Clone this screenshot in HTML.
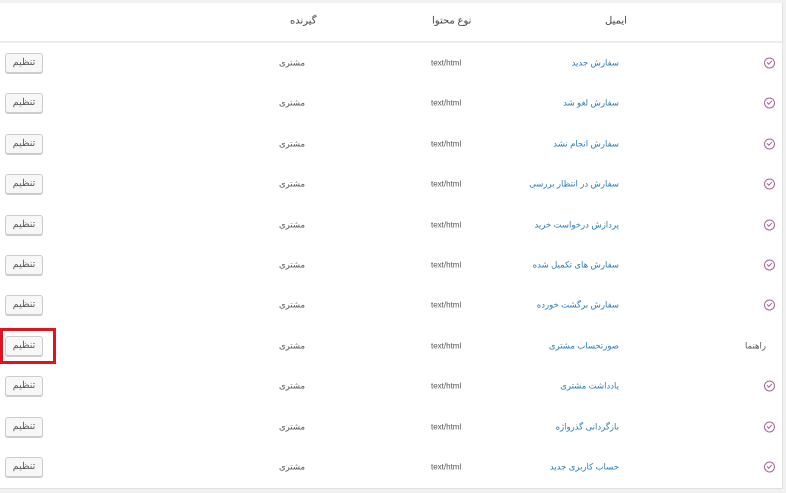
<!DOCTYPE html>
<html><head><meta charset="utf-8"><style>
body{margin:0;width:786px;height:493px;background:#f1f1f1;font-family:"Liberation Sans","Noto Sans CJK SC",sans-serif;font-size:8.5px;color:#555;position:relative;overflow:hidden}
.card{position:absolute;left:0;top:3px;width:782px;height:485px;background:#fff;border-right:1px solid #e2e2e2;border-bottom:1px solid #e2e2e2}
.hl{position:absolute;left:0;width:782px;top:41px;height:2px;background:#ececec}
.t{position:absolute;white-space:nowrap;direction:rtl;transform:translateY(-50%)}
.em{color:#2a7bb5}
.btn{position:absolute;left:5px;width:36px;height:18px;border:1px solid #ccc;border-radius:3px;background:#f7f7f7;box-shadow:0 1px 0 #ccc;font-size:9.5px;line-height:18px;text-align:center;color:#555;transform:translateY(-50%)}
.ic{position:absolute;left:764px;width:9px;height:9px;border:1px solid #a36597;border-radius:50%;transform:translateY(-50%)}
.ic:after{content:"";position:absolute;left:3px;top:1px;width:2px;height:4px;border:solid #a36597;border-width:0 1px 1px 0;transform:rotate(45deg)}
.red{position:absolute;left:0;top:328px;width:56px;height:36px;border:3px solid #e0141e;box-sizing:border-box}
</style></head><body>
<div class="card"></div><div class="hl"></div>
<div class="t" style="top:21px;left:605px;font-size:10px;color:#444">ایمیل</div>
<div class="t" style="top:21px;left:432px;font-size:10px;color:#444">نوع محتوا</div>
<div class="t" style="top:21px;left:290px;font-size:10px;color:#444">گیرنده</div>
<div id="rows"></div>
<div class="red"></div>
<script>
var n=["سفارش جدید","سفارش لغو شد","سفارش انجام نشد","سفارش در انتظار بررسی","پردازش درخواست خرید","سفارش های تکمیل شده","سفارش برگشت خورده","صورتحساب مشتری","یادداشت مشتری","بازگردانی گذرواژه","حساب کاربری جدید"];
var h="";
for(var i=0;i<11;i++){var y=63+i*40.4;
h+='<div class="t em" style="top:'+y+'px;right:167px">'+n[i]+'</div>';
h+='<div class="t" style="top:'+y+'px;left:431px;direction:ltr;font-size:8px">text/html</div>';
h+='<div class="t" style="top:'+y+'px;right:481px">مشتری</div>';
h+='<div class="btn" style="top:'+y+'px">تنظیم</div>';
if(i==7)h+='<div class="t" style="top:'+y+'px;right:20px">راهنما</div>';else h+='<div class="ic" style="top:'+y+'px"></div>';}
document.getElementById("rows").innerHTML=h;
</script>
</body></html>
